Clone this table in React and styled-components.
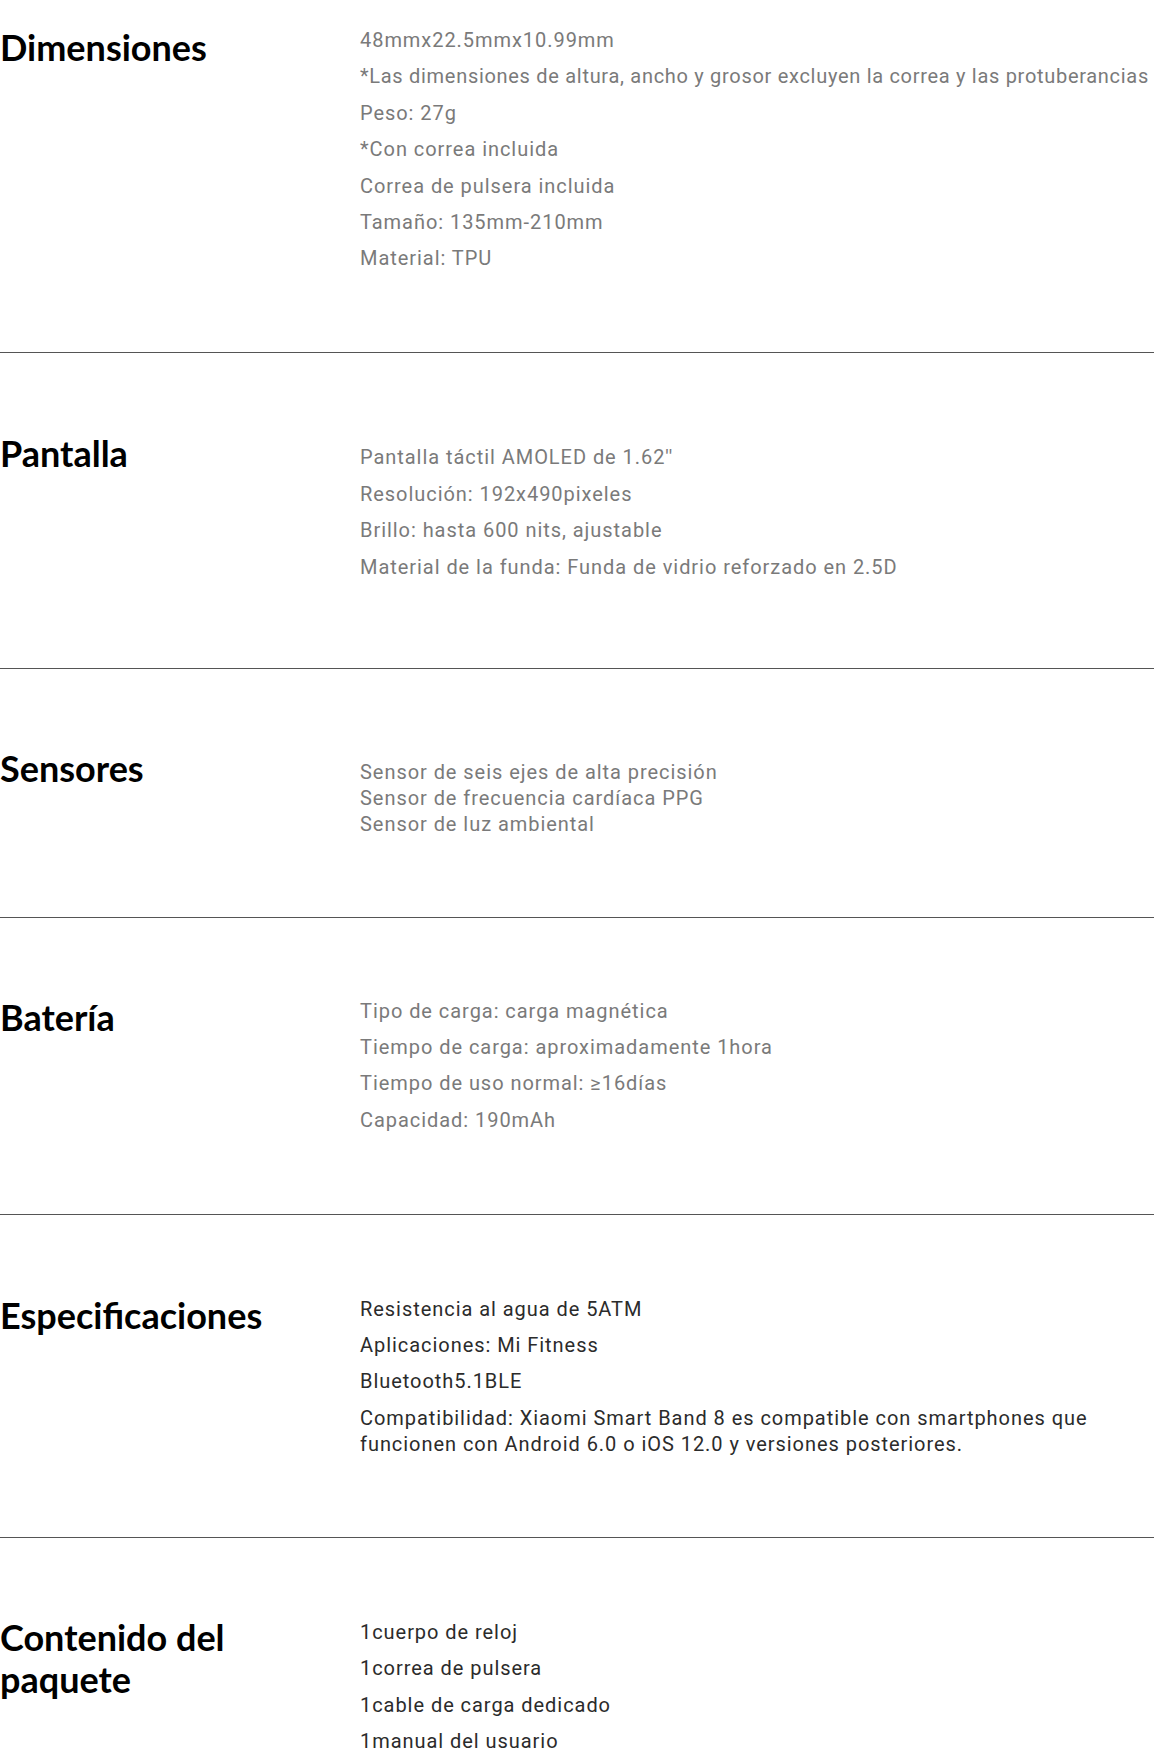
import React from 'react';
import styled, { createGlobalStyle } from 'styled-components';

const GlobalStyle = createGlobalStyle`
  html, body {
    margin: 0;
    padding: 0;
    background: #fff;
  }
  body {
    overflow-x: hidden;
  }
`;

const Page = styled.main`
  width: 1154px;
  display: flex;
  flex-direction: column;
`;

const Section = styled.section`
  display: grid;
  grid-template-columns: 360px 1fr;
  align-items: start;
  padding-top: ${p => p.pt}px;
  padding-bottom: ${p => p.pb}px;
  border-bottom: ${p => (p.last ? 'none' : '1px solid #555')};
`;

const Heading = styled.h2`
  margin: ${p => p.lift}px 0 0 0;
  padding-right: 24px;
  font-family: Lato, 'Noto Sans', sans-serif;
  font-weight: 700;
  font-size: 36px;
  line-height: 42px;
  color: #000;
`;

const Body = styled.div`
  display: flex;
  flex-direction: column;
  font-family: Roboto, 'Noto Sans', sans-serif;
  font-weight: 400;
  font-size: 20px;
  line-height: 26px;
  letter-spacing: 0.95px;
  color: ${p => (p.dark ? '#2b2b2b' : '#7a7a7a')};
`;

const Line = styled.p`
  margin: 0 0 10.4px 0;
  white-space: ${p => (p.tight ? 'nowrap' : 'normal')};
  letter-spacing: ${p => (p.tight ? '0.7px' : 'inherit')};

  &:last-child {
    margin-bottom: 0;
  }
`;

const sections = [
  {
    title: 'Dimensiones',
    pt: 27, pb: 81, lift: -1,
    lines: [
      '48mmx22.5mmx10.99mm',
      '*Las dimensiones de altura, ancho y grosor excluyen la correa y las protuberancias',
      'Peso: 27g',
      '*Con correa incluida',
      'Correa de pulsera incluida',
      'Tamaño: 135mm-210mm',
      'Material: TPU',
    ],
  },
  {
    title: 'Pantalla',
    pt: 91, pb: 88, lift: -12,
    lines: [
      'Pantalla táctil AMOLED de 1.62\'\'',
      'Resolución: 192x490pixeles',
      'Brillo: hasta 600 nits, ajustable',
      'Material de la funda: Funda de vidrio reforzado en 2.5D',
    ],
  },
  {
    title: 'Sensores',
    pt: 90, pb: 80, lift: -12,
    block: [
      'Sensor de seis ejes de alta precisión',
      'Sensor de frecuencia cardíaca PPG',
      'Sensor de luz ambiental',
    ],
  },
  {
    title: 'Batería',
    pt: 80, pb: 81, lift: -2,
    lines: [
      'Tipo de carga: carga magnética',
      'Tiempo de carga: aproximadamente 1hora',
      'Tiempo de uso normal: ≥16días',
      'Capacidad: 190mAh',
    ],
  },
  {
    title: 'Especificaciones',
    pt: 81, pb: 80, lift: -2, dark: true,
    lines: [
      'Resistencia al agua de 5ATM',
      'Aplicaciones: Mi Fitness',
      'Bluetooth5.1BLE',
      'Compatibilidad: Xiaomi Smart Band 8 es compatible con smartphones que funcionen con Android 6.0 o iOS 12.0 y versiones posteriores.',
    ],
  },
  {
    title: 'Contenido del paquete',
    pt: 81, pb: 20, lift: -3, dark: true, last: true,
    lines: [
      '1cuerpo de reloj',
      '1correa de pulsera',
      '1cable de carga dedicado',
      '1manual del usuario',
    ],
  },
];

export default function App() {
  return (
    <Page>
      <GlobalStyle />
      {sections.map(s => (
        <Section key={s.title} pt={s.pt} pb={s.pb} last={s.last}>
          <Heading lift={s.lift}>{s.title}</Heading>
          <Body dark={s.dark}>
            {s.lines && s.lines.map(l => (
              <Line key={l} tight={l.startsWith('*Las')}>{l}</Line>
            ))}
            {s.block && (
              <Line>
                {s.block.map((l, i) => (
                  <React.Fragment key={l}>
                    {i > 0 && <br />}
                    {l}
                  </React.Fragment>
                ))}
              </Line>
            )}
          </Body>
        </Section>
      ))}
    </Page>
  );
}
